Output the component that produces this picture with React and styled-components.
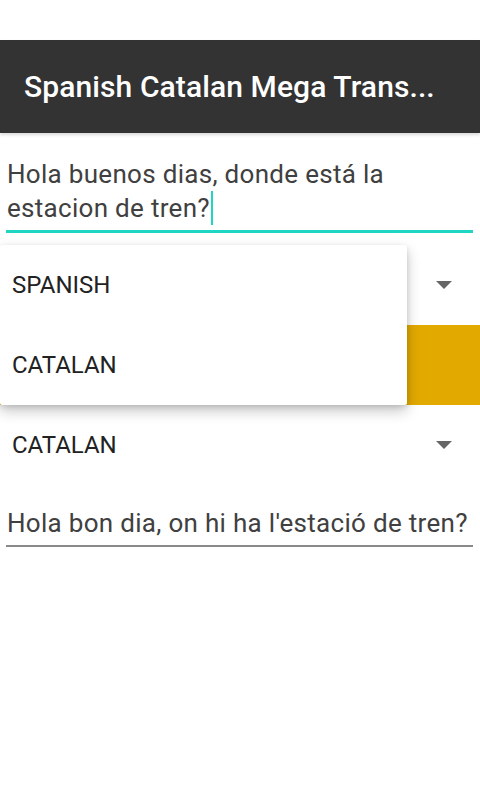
import React from 'react'
import styled, { createGlobalStyle } from 'styled-components'

const Global = createGlobalStyle`
  html, body {
    margin: 0;
    padding: 0;
    background: #fff;
    font-family: Roboto, "Noto Sans", sans-serif;
  }
`

const Screen = styled.div`
  position: relative;
  width: 480px;
  height: 800px;
  background: #fff;
  overflow: hidden;
`

const StatusBar = styled.div`
  height: 40px;
  background: #fff;
`

const Toolbar = styled.div`
  height: 93px;
  background: #333333;
  display: flex;
  align-items: center;
  padding: 0 24px;
  box-shadow: 0 2px 3px rgba(0, 0, 0, 0.15);
`

const Title = styled.div`
  color: #fff;
  font-size: 30px;
  font-weight: 500;
  white-space: nowrap;
  letter-spacing: 0.1px;
`

const Body = styled.div`
  display: flex;
  flex-direction: column;
`

const Field = styled.div`
  margin: 0 7px 0 6px;
  padding: ${p => p.pad};
  padding-left: 1px;
  border-bottom: ${p => (p.focused ? '3px solid #1ed6c1' : '2px solid #8a8a8a')};
  color: #404040;
  font-size: 26px;
  line-height: 34px;
  letter-spacing: 0.3px;
  white-space: ${p => (p.single ? 'nowrap' : 'normal')};
`

const Caret = styled.span`
  display: inline-block;
  width: 2px;
  height: 34px;
  background: #1ed6c1;
  vertical-align: -8px;
  margin-left: 1px;
`

const Spinner = styled.div`
  height: 80px;
  display: flex;
  align-items: center;
  justify-content: space-between;
  padding: 0 28px 0 12px;
  font-size: 24px;
  color: #222;
`

const Gap = styled.div`
  height: 12px;
`

const Arrow = () => (
  <svg width="16" height="8" viewBox="0 0 16 8">
    <polygon points="0,0 16,0 8,8" fill="#666" />
  </svg>
)

const Button = styled.div`
  height: 80px;
  background: #e2a900;
`

const Menu = styled.div`
  position: absolute;
  left: 0;
  top: 245px;
  width: 407px;
  height: 160px;
  background: #fff;
  border-radius: 2px;
  box-shadow: 0 6px 14px rgba(0, 0, 0, 0.22), 0 2px 5px rgba(0, 0, 0, 0.12);
  display: flex;
  flex-direction: column;
`

const MenuItem = styled.div`
  height: 80px;
  display: flex;
  align-items: center;
  padding-left: 12px;
  font-size: 24px;
  color: #222;
`

export default function App() {
  return (
    <Screen>
      <Global />
      <StatusBar />
      <Toolbar>
        <Title>Spanish Catalan Mega Trans...</Title>
      </Toolbar>
      <Body>
        <Field focused pad="24px 0 5px 0">
          Hola buenos dias, donde está la estacion de tren?<Caret />
        </Field>
        <Gap />
        <Spinner>
          SPANISH
          <Arrow />
        </Spinner>
        <Button />
        <Spinner>
          CATALAN
          <Arrow />
        </Spinner>
        <Field single pad="21px 0 5px 0">Hola bon dia, on hi ha l'estació de tren?</Field>
      </Body>
      <Menu>
        <MenuItem>SPANISH</MenuItem>
        <MenuItem>CATALAN</MenuItem>
      </Menu>
    </Screen>
  )
}
